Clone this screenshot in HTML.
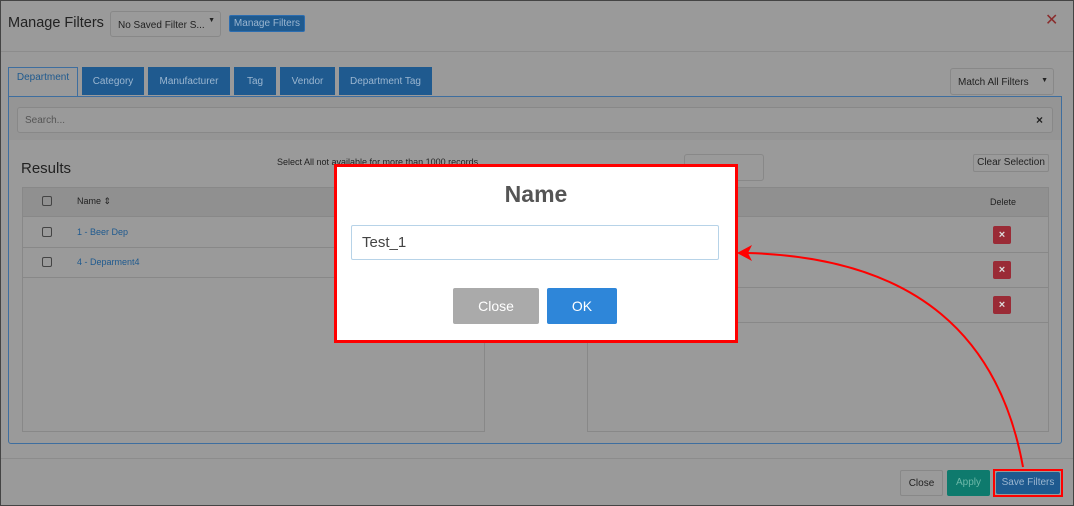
<!DOCTYPE html>
<html><head><style>
*{box-sizing:border-box;margin:0;padding:0}
body{width:1074px;height:506px;overflow:hidden;background:#9a9a9a;font-family:"Liberation Sans",sans-serif;position:relative}
.a{position:absolute}
.t{font-size:10px;color:#222}
.tab{position:absolute;top:67px;height:28px;background:#1f5a8f;color:#9bb6d0;font-size:10px;text-align:center;line-height:28px;padding-top:1px}
.bt{position:absolute;border-radius:2px;font-size:10px;text-align:center}
.x{position:absolute;left:993px;width:18px;height:18px;background:#9a2b36;border-radius:2px;color:#ddd;font-size:11px;font-weight:bold;text-align:center;line-height:18px}
</style></head><body>
<div class="a" style="left:0;top:0;width:1074px;height:506px;border:1px solid #444"></div>
<div class="a" style="left:8px;top:15px;font-size:14.5px;color:#222">Manage Filters</div>
<div class="a" style="left:110px;top:11px;width:111px;height:26px;border:1px solid #888;border-radius:3px;font-size:10px;color:#222;padding:8px 0 0 7px">No Saved Filter S... <span style="position:absolute;right:5px;top:5px;font-size:7px">▼</span></div>
<div class="bt" style="left:229px;top:15px;width:76px;height:17px;background:#1f5a8f;color:#9bb6d0;line-height:16px;border:1px solid #2c6db0">Manage Filters</div>
<div class="a" style="left:1045px;top:10px;color:#8a2c2c;font-size:16px">✕</div>
<div class="a" style="left:1px;top:51px;width:1072px;height:1px;background:#8c8c8c"></div>
<div class="a" style="left:8px;top:67px;width:70px;height:30px;border:1px solid #3e6e9f;border-bottom:none;background:#9a9a9a;color:#1f5a8f;font-size:10px;text-align:center;line-height:20px">Department</div>
<div class="tab" style="left:82px;width:62px">Category</div>
<div class="tab" style="left:148px;width:82px">Manufacturer</div>
<div class="tab" style="left:234px;width:42px">Tag</div>
<div class="tab" style="left:280px;width:55px">Vendor</div>
<div class="tab" style="left:339px;width:93px">Department Tag</div>
<div class="a" style="left:950px;top:68px;width:104px;height:27px;border:1px solid #888;border-radius:3px;font-size:10px;color:#222;padding:8px 0 0 7px">Match All Filters <span style="position:absolute;right:5px;top:8px;font-size:7px">▼</span></div>
<div class="a" style="left:8px;top:96px;width:1054px;height:348px;border:1px solid #3e6e9f;border-radius:0 0 3px 3px"></div>
<div class="a" style="left:9px;top:97px;width:1052px;height:43px;background:#959595"></div>
<div class="a" style="left:17px;top:107px;width:1036px;height:26px;border:1px solid #888;border-radius:3px;background:#9a9a9a;font-size:10px;color:#555;padding:7px 0 0 7px">Search...<span style="position:absolute;right:9px;top:5px;color:#222;font-weight:bold;font-size:12px">×</span></div>
<div class="a" style="left:21px;top:160px;font-size:15px;color:#222">Results</div>
<div class="a t" style="left:277px;top:157px;font-size:9px">Select All not available for more than 1000 records</div>
<div class="a" style="left:684px;top:154px;width:80px;height:27px;border:1px solid #888;border-radius:3px"></div>
<div class="bt" style="left:973px;top:154px;width:76px;height:18px;border:1px solid #888;line-height:16px;color:#222">Clear Selection</div>
<div class="a" style="left:22px;top:187px;width:463px;height:245px;border:1px solid #888"></div>
<div class="a" style="left:23px;top:188px;width:461px;height:29px;background:#909090;border-bottom:1px solid #888"></div>
<div class="a" style="left:23px;top:247px;width:461px;height:1px;background:#888"></div>
<div class="a" style="left:23px;top:277px;width:461px;height:1px;background:#888"></div>
<div class="a" style="left:42px;top:196px;width:10px;height:10px;border:1px solid #444;border-radius:2px"></div>
<div class="a" style="left:42px;top:227px;width:10px;height:10px;border:1px solid #444;border-radius:2px"></div>
<div class="a" style="left:42px;top:257px;width:10px;height:10px;border:1px solid #444;border-radius:2px"></div>
<div class="a t" style="left:77px;top:196px;font-size:9px">Name ⇕</div>
<div class="a" style="left:77px;top:227px;font-size:9px;color:#1f5a8f">1 - Beer Dep</div>
<div class="a" style="left:77px;top:257px;font-size:9px;color:#1f5a8f">4 - Deparment4</div>
<div class="a" style="left:587px;top:187px;width:462px;height:245px;border:1px solid #888"></div>
<div class="a" style="left:588px;top:188px;width:460px;height:29px;background:#909090;border-bottom:1px solid #888"></div>
<div class="a" style="left:588px;top:252px;width:460px;height:1px;background:#888"></div>
<div class="a" style="left:588px;top:287px;width:460px;height:1px;background:#888"></div>
<div class="a" style="left:588px;top:322px;width:460px;height:1px;background:#888"></div>
<div class="a t" style="left:990px;top:197px;font-size:9px">Delete</div>
<div class="x" style="top:226px">×</div>
<div class="x" style="top:261px">×</div>
<div class="x" style="top:296px">×</div>
<div class="a" style="left:1px;top:458px;width:1072px;height:1px;background:#8c8c8c"></div>
<div class="bt" style="left:900px;top:470px;width:43px;height:26px;border:1px solid #888;line-height:26px;color:#222">Close</div>
<div class="bt" style="left:947px;top:470px;width:43px;height:26px;background:#0e7a6d;line-height:26px;color:#6cb8a8">Apply</div>
<div class="a" style="left:993px;top:469px;width:70px;height:28px;border:2px solid #f00"></div>
<div class="bt" style="left:996px;top:472px;width:64px;height:22px;background:#1f5a8f;line-height:22px;color:#9bb6d0">Save Filters</div>
<div class="a" style="left:334px;top:164px;width:404px;height:179px;border:3px solid #f00;background:#fff"></div>
<div class="a" style="left:334px;top:181px;width:404px;text-align:center;font-size:23px;font-weight:bold;color:#555">Name</div>
<div class="a" style="left:351px;top:225px;width:368px;height:35px;border:1px solid #b7d3e8;border-radius:2px;font-size:15px;color:#444;padding:8px 0 0 10px">Test_1</div>
<div class="bt" style="left:453px;top:288px;width:86px;height:36px;background:#aaa;color:#fff;font-size:14px;line-height:36px">Close</div>
<div class="bt" style="left:547px;top:288px;width:70px;height:36px;background:#2e86d9;color:#fff;font-size:14px;line-height:36px">OK</div>
<svg class="a" style="left:0;top:0" width="1074" height="506"><path d="M1023,467 C1000,340 920,258 748,253" fill="none" stroke="#f00" stroke-width="2"/><path d="M737,253 L752,245 L748,253 L752,261 Z" fill="#f00"/></svg>
</body></html>
